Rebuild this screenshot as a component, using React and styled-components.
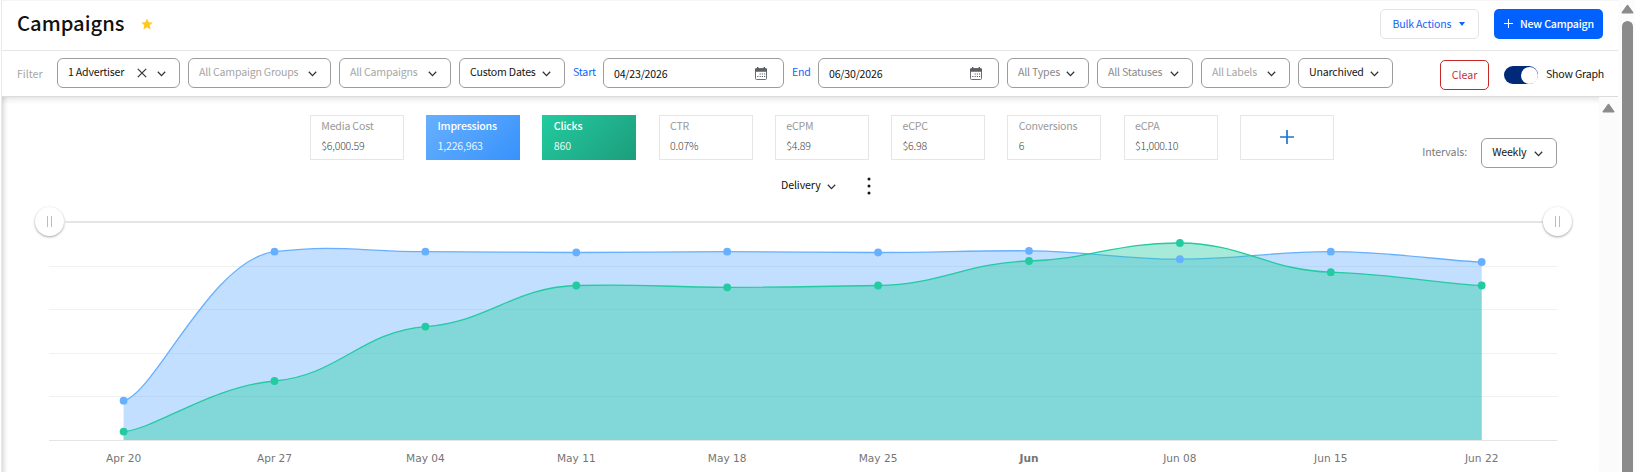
import React from 'react';
import styled, { createGlobalStyle, css } from 'styled-components';

const filters = [
  { label: '1 Advertiser', width: 123, dark: true, clearable: true },
  { label: 'All Campaign Groups', width: 143 },
  { label: 'All Campaigns', width: 112 },
  { label: 'Custom Dates', width: 106, dark: true },
];

const statusFilters = [
  { label: 'All Types', width: 82, color: '#8a8a8a' },
  { label: 'All Statuses', width: 96, color: '#8a8a8a' },
  { label: 'All Labels', width: 89 },
  { label: 'Unarchived', width: 95, dark: true },
];

const metrics = [
  { label: 'Media Cost', value: '$6,000.59' },
  { label: 'Impressions', value: '1,226,963', tone: 'blue' },
  { label: 'Clicks', value: '860', tone: 'green' },
  { label: 'CTR', value: '0.07%' },
  { label: 'eCPM', value: '$4.89' },
  { label: 'eCPC', value: '$6.98' },
  { label: 'Conversions', value: '6' },
  { label: 'eCPA', value: '$1,000.10' },
];

const tones = {
  blue: 'linear-gradient(135deg, #67b0ff 0%, #3792fb 100%)',
  green: 'linear-gradient(135deg, #22cba0 0%, #1d9d7c 100%)',
};

const weeks = ['Apr 20', 'Apr 27', 'May 04', 'May 11', 'May 18', 'May 25', 'Jun', 'Jun 08', 'Jun 15', 'Jun 22'];
const impressions = [162.7, 13.7, 13.7, 14.5, 13.7, 14.5, 12.8, 21.2, 13.7, 24];
const clicks = [193.6, 143, 88.6, 47.5, 49.3, 47.5, 23, 5, 34.2, 47.5];
const gridLines = [28.5, 71.5, 115.5, 158.5];
const BASE = 202;

const pointX = (i) => 74.6 + i * 150.9;

// cubic spline with a stronger horizontal than vertical pull
const linePath = (values) => {
  const at = (i) => {
    const k = Math.min(Math.max(i, 0), values.length - 1);
    return [pointX(k), values[k]];
  };
  let d = `M${at(0).join(',')}`;
  for (let i = 0; i < values.length - 1; i++) {
    const [p0, p1, p2, p3] = [at(i - 1), at(i), at(i + 1), at(i + 2)];
    const a = [p1[0] + (p2[0] - p0[0]) * 0.21, p1[1] + (p2[1] - p0[1]) * 0.05];
    const b = [p2[0] - (p3[0] - p1[0]) * 0.21, p2[1] - (p3[1] - p1[1]) * 0.05];
    d += ` C${a.join(',')} ${b.join(',')} ${p2.join(',')}`;
  }
  return d;
};

const Chevron = () => (
  <ChevronIcon viewBox="0 0 9 6">
    <path d="M0.8 0.8 L4.5 4.6 L8.2 0.8" />
  </ChevronIcon>
);

const Calendar = () => (
  <CalendarIcon viewBox="0 0 12 13">
    <rect x="0.5" y="1.8" width="11" height="10.7" rx="1" fill="#fff" stroke="#6b6e72" />
    <path d="M0 4.8V2.3a1 1 0 0 1 1-1h1V0h1.4v1.3h5.2V0H10v1.3h1a1 1 0 0 1 1 1v2.5z" />
    <path d="M4.6 6.4h1.2v1.2H4.6zM6.8 6.4H8v1.2H6.8zM9 6.4h1.2v1.2H9zM2.2 8.9h1.2v1.2H2.2zM4.6 8.9h1.2v1.2H4.6zM6.8 8.9H8v1.2H6.8zM9 8.9h1.2v1.2H9z" />
  </CalendarIcon>
);

const Select = ({ label, width, dark, color, clearable }) => (
  <SelectBox $width={width} $dark={dark} $color={color}>
    <span>{label}</span>
    {clearable && (
      <CloseIcon viewBox="0 0 10 10">
        <path d="M0.8 0.8 L9.2 9.2 M9.2 0.8 L0.8 9.2" />
      </CloseIcon>
    )}
    <Chevron />
  </SelectBox>
);

const DateField = ({ label, value, labelWidth }) => (
  <>
    <DateLabel $width={labelWidth}>{label}</DateLabel>
    <DateBox>
      <span>{value}</span>
      <Calendar />
    </DateBox>
  </>
);

const Series = ({ values, color }) => (
  <g>
    <path d={`${linePath(values)} V${BASE} H${pointX(0)} Z`} fill={color} fillOpacity="0.4" />
    <path d={linePath(values)} fill="none" stroke={color} strokeWidth="1.3" />
  </g>
);

const Dots = ({ values, color }) => (
  <g fill={color}>
    {values.map((y, i) => (
      <circle key={i} cx={pointX(i)} cy={y} r="3.9" />
    ))}
  </g>
);

const Chart = () => (
  <ChartSvg viewBox="0 0 1510 234">
    {gridLines.map((y) => (
      <line key={y} x1="0" x2="1508.5" y1={y} y2={y} stroke="#f1f1f1" />
    ))}
    <line x1="0" x2="1508.5" y1="202.5" y2="202.5" stroke="#e4e4e4" />
    <Series values={impressions} color="#67b0ff" />
    <Series values={clicks} color="#22cba0" />
    <Dots values={impressions} color="#67b0ff" />
    <Dots values={clicks} color="#22cba0" />
    {weeks.map((week, i) => (
      <AxisLabel key={week} x={pointX(i)} y="224.4" $bold={week === 'Jun'}>
        {week}
      </AxisLabel>
    ))}
  </ChartSvg>
);

const App = () => (
  <Page>
    <GlobalStyle />
    <Main>
      <Header>
        <Title>Campaigns</Title>
        <Star viewBox="0 0 24 24">
          <path d="M12 0.8l3.4 7.6 8.1.8-6.1 5.5 1.8 8.2L12 18.7l-7.2 4.2 1.8-8.2L.5 9.2l8.1-.8z" />
        </Star>
        <BulkButton>
          Bulk Actions
          <Caret />
        </BulkButton>
        <NewButton>
          <PlusIcon $size={9} viewBox="0 0 9 9">
            <path d="M4.5 0v9M0 4.5h9" />
          </PlusIcon>
          New Campaign
        </NewButton>
      </Header>
      <FilterBar>
        <FilterLabel>Filter</FilterLabel>
        {filters.map((f) => (
          <Select key={f.label} {...f} />
        ))}
        <DateField label="Start" value="04/23/2026" labelWidth={22} />
        <DateField label="End" value="06/30/2026" labelWidth={18} />
        {statusFilters.map((f) => (
          <Select key={f.label} {...f} />
        ))}
        <ClearButton>Clear</ClearButton>
        <Toggle>
          <Knob />
        </Toggle>
        <ToggleLabel>Show Graph</ToggleLabel>
      </FilterBar>
      <Body>
        <Content>
          <MetricRow>
            {metrics.map((m) => (
              <Metric key={m.label} $tone={m.tone}>
                <MetricLabel $active={m.tone}>{m.label}</MetricLabel>
                <MetricValue $active={m.tone}>{m.value}</MetricValue>
              </Metric>
            ))}
            <AddMetric>
              <PlusIcon $size={14} viewBox="0 0 14 14">
                <path d="M7 0v14M0 7h14" strokeWidth="1.7" />
              </PlusIcon>
            </AddMetric>
            <Intervals>
              <IntervalsLabel>Intervals:</IntervalsLabel>
              <Select label="Weekly" width={76} dark />
            </Intervals>
          </MetricRow>
          <DeliveryRow>
            <span>Delivery</span>
            <Chevron />
            <MoreIcon viewBox="0 0 4 18">
              <circle cx="2" cy="2" r="1.5" />
              <circle cx="2" cy="9" r="1.5" />
              <circle cx="2" cy="16" r="1.5" />
            </MoreIcon>
          </DeliveryRow>
          <RangeSlider>
            <Handle>
              <Grip />
            </Handle>
            <Track />
            <Handle>
              <Grip />
            </Handle>
          </RangeSlider>
          <Chart />
        </Content>
        <InnerScroll>
          <ScrollArrow viewBox="0 0 13 10">
            <path d="M6.5 1.5L11.7 8.7H1.3z" />
          </ScrollArrow>
        </InnerScroll>
      </Body>
    </Main>
    <OuterScroll>
      <ScrollArrow viewBox="0 0 13 10">
        <path d="M6.5 1.5L11.7 8.7H1.3z" />
      </ScrollArrow>
      <Thumb />
    </OuterScroll>
  </Page>
);

const GlobalStyle = createGlobalStyle`
  * {
    box-sizing: border-box;
  }
  body {
    margin: 0;
    overflow: hidden;
    background: #fff;
    color: #111;
    font-family: "Noto Sans CJK SC", "Noto Sans", sans-serif;
    font-size: 10.6px;
    line-height: 16px;
    letter-spacing: -0.2px;
  }
  svg {
    display: block;
    flex: none;
  }
`;

const Page = styled.div`
  display: flex;
  width: 1635px;
  height: 472px;
  overflow: hidden;
`;

const Main = styled.div`
  width: 1617px;
  border-left: 1px solid #e9e9e9;
  margin-left: 1px;
  display: flex;
  flex-direction: column;
`;

const Header = styled.div`
  display: flex;
  align-items: center;
  height: 51px;
  padding: 0 15px 4px;
  border-top: 1px solid #f5f5f5;
  border-bottom: 1px solid #e6e6e6;
`;

const Title = styled.h1`
  margin: -2px 0 0;
  width: 123.5px;
  font-size: 20.2px;
  line-height: 28px;
  font-weight: 500;
  letter-spacing: 0;
`;

const Star = styled.svg`
  width: 12px;
  height: 12px;
  margin-top: 1px;
  fill: #ffc71f;
`;

const buttonBase = css`
  display: flex;
  align-items: center;
  flex: none;
  height: 30px;
  border-radius: 5px;
  white-space: nowrap;
`;

const BulkButton = styled.div`
  ${buttonBase}
  width: 99px;
  margin-left: auto;
  padding-left: 11.5px;
  border: 1px solid #e2e4e8;
  color: #0f62fe;
`;

const Caret = styled.div`
  margin: 1px 0 0 8px;
  border: 3.5px solid transparent;
  border-top: 4px solid #0f62fe;
  border-bottom: 0;
`;

const NewButton = styled.div`
  ${buttonBase}
  width: 109px;
  margin-left: 15px;
  padding-left: 10px;
  gap: 7px;
  background: #0061ff;
  color: #fff;
  font-weight: 500;
`;

const PlusIcon = styled.svg`
  width: ${(p) => p.$size}px;
  height: ${(p) => p.$size}px;
  stroke: currentColor;
`;

const FilterBar = styled.div`
  display: flex;
  align-items: center;
  flex: none;
  gap: 8px;
  height: 46px;
  padding: 0 15px 1px;
  border-bottom: 1px solid #dcdcdc;
`;

const FilterLabel = styled.span`
  width: 32px;
  margin-top: 2px;
  color: #a6a6a6;
  letter-spacing: 0;
`;

const SelectBox = styled.div`
  display: flex;
  align-items: center;
  flex: none;
  width: ${(p) => p.$width}px;
  height: 30px;
  padding: 0 13px 2px 10px;
  border: 1px solid #9c9c9c;
  border-radius: 6px;
  color: ${(p) => (p.$dark ? '#161616' : p.$color || '#a6a6a6')};
  white-space: nowrap;
  span {
    flex: 1;
  }
`;

const ChevronIcon = styled.svg`
  width: 9px;
  height: 6px;
  margin-top: 3px;
  fill: none;
  stroke: #333;
  stroke-width: 1.3;
`;

const CloseIcon = styled.svg`
  width: 10px;
  height: 10px;
  margin: 2px 10px 0 0;
  stroke: #333;
  stroke-width: 1.2;
`;

const DateLabel = styled.span`
  width: ${(p) => p.$width}px;
  margin-top: -2px;
  color: #0f62fe;
  white-space: nowrap;
`;

const DateBox = styled.div`
  display: flex;
  align-items: center;
  justify-content: space-between;
  flex: none;
  width: 181px;
  height: 30px;
  padding: 0 16px 0 10px;
  border: 1px solid #9c9c9c;
  border-radius: 6px;
  span {
    margin-top: 1px;
  }
`;

const CalendarIcon = styled.svg`
  width: 12px;
  height: 13px;
  fill: #5c5f63;
`;

const ClearButton = styled.div`
  ${buttonBase}
  justify-content: center;
  width: 49px;
  margin: 4px 0 0 auto;
  padding-bottom: 1px;
  border: 1px solid #c62828;
  color: #c1333a;
  letter-spacing: 0;
`;

const Toggle = styled.div`
  display: flex;
  justify-content: flex-end;
  flex: none;
  width: 34px;
  height: 18px;
  margin: 4px 0 0 7px;
  padding: 0.5px;
  border-radius: 9px;
  background: #00297a;
`;

const Knob = styled.div`
  width: 17px;
  height: 17px;
  border-radius: 50%;
  background: #fff;
`;

const ToggleLabel = styled.span`
  width: 57px;
  margin-top: 2px;
  white-space: nowrap;
`;

const Body = styled.div`
  display: flex;
  flex: 1;
  min-height: 0;
`;

const Content = styled.div`
  width: 1597px;
  box-shadow: inset 0 7px 6px -5px rgba(0, 0, 0, 0.13), inset 6px 0 5px -4px rgba(0, 0, 0, 0.16);
`;

const MetricRow = styled.div`
  display: flex;
  gap: 22.25px;
  height: 71px;
  padding: 18px 0 0 307.9px;
`;

const Metric = styled.div`
  flex: none;
  width: 94px;
  height: 45px;
  padding: 2px 0 0 10.4px;
  border: ${(p) => (p.$tone ? '0' : '1px solid #e6e6e6')};
  ${(p) =>
    p.$tone &&
    css`
      padding: 3px 0 0 11.4px;
      background: ${tones[p.$tone]};
    `}
`;

const MetricLabel = styled.div`
  color: ${(p) => (p.$active ? '#fff' : '#999')};
  font-weight: ${(p) => (p.$active ? 500 : 400)};
`;

const MetricValue = styled.div`
  margin-top: 4px;
  font-weight: ${(p) => (p.$active ? 400 : 300)};
  color: ${(p) => (p.$active ? 'rgba(255, 255, 255, 0.9)' : '#444')};
`;

const AddMetric = styled(Metric)`
  display: flex;
  align-items: center;
  justify-content: center;
  padding: 0 0 2px;
  color: #1f74d2;
`;

const Intervals = styled.div`
  display: flex;
  align-items: center;
  justify-content: space-between;
  width: 135px;
  height: 30px;
  margin: 23px 0 0 66px;
`;

const IntervalsLabel = styled.span`
  margin-top: -2px;
  color: #7a7a7a;
  letter-spacing: -0.1px;
`;

const DeliveryRow = styled.div`
  display: flex;
  align-items: center;
  height: 37px;
  padding: 0 0 2px 779px;
  span {
    width: 46px;
    margin-top: -1px;
    letter-spacing: -0.1px;
  }
`;

const MoreIcon = styled.svg`
  width: 4px;
  height: 18px;
  margin: 0 0 0 31px;
  fill: #161616;
`;

const RangeSlider = styled.div`
  display: flex;
  align-items: center;
  width: 1537px;
  height: 33px;
  margin-left: 32.5px;
`;

const Handle = styled.div`
  display: flex;
  align-items: center;
  justify-content: center;
  flex: none;
  width: 29px;
  height: 29px;
  border-radius: 50%;
  background: #fff;
  box-shadow: 0 1px 2.5px rgba(0, 0, 0, 0.36);
`;

const Grip = styled.div`
  width: 5px;
  height: 11px;
  border: solid #bdbdbd;
  border-width: 0 1.5px;
`;

const Track = styled.div`
  flex: 1;
  height: 2px;
  background: #e5e5e5;
`;

const ChartSvg = styled.svg`
  width: 1510px;
  height: 234px;
  margin-left: 47px;
`;

const AxisLabel = styled.text`
  fill: #757575;
  font-family: "DejaVu Sans", sans-serif;
  font-size: 10.6px;
  font-weight: ${(p) => (p.$bold ? 700 : 400)};
  letter-spacing: 0;
  text-anchor: middle;
`;

const InnerScroll = styled.div`
  flex: 1;
  padding: 6px 0 0 3px;
  background: #fbfbfb;
`;

const ScrollArrow = styled.svg`
  width: 13px;
  height: 10px;
  fill: #8b8b8b;
  stroke: #8b8b8b;
  stroke-width: 1.5;
  stroke-linejoin: round;
`;

const OuterScroll = styled.div`
  width: 17px;
  padding: 4px 0 0 3px;
  background: #fcfcfc;
`;

const Thumb = styled.div`
  width: 11px;
  height: 470px;
  margin: 7px 0 0 1px;
  border-radius: 6px;
  background: #8b8b8b;
`;

export default App;
